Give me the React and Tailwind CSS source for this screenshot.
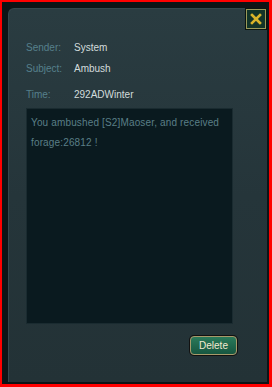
import React from "react";

const rows = [
  { label: "Sender:", value: "System", gap: "mt-[33px]" },
  { label: "Subject:", value: "Ambush", gap: "mt-[9px]" },
  { label: "Time:", value: "292ADWinter", gap: "mt-[14px]" },
];

export default function App() {
  return (
    <div
      className="w-[272px] h-[387px] border-l-2 border-t-2 border-r-[3px] border-b-[3px] border-[#ff0000] bg-[#0d1416] p-[6px] pr-[2px] pb-[2px]"
      style={{ fontFamily: '"Liberation Sans", Arial, sans-serif' }}
    >
      <div className="relative h-full rounded-tl-[6px] bg-gradient-to-b from-[#2a3c41] via-[#25353a] to-[#233236] border-l border-t border-[#34474c] pl-[17px] pr-[34px]">
        {/* close */}
        <button className="absolute right-[1px] top-[0px] w-[20px] h-[20px] bg-[#123429] border border-[#9a9a5a] shadow-[0_0_0_1px_#0a1410] flex items-center justify-center">
          <svg width="12" height="12" viewBox="0 0 12 12">
            <path d="M2 2 L10 10 M10 2 L2 10" stroke="#d8b42a" strokeWidth="2.6" strokeLinecap="square" />
          </svg>
        </button>

        {rows.map((r) => (
          <div key={r.label} className={`flex text-[10px] leading-[12px] ${r.gap}`}>
            <span className="w-[48px] text-[#56808c]">{r.label}</span>
            <span className="text-[#d2dcdc]">{r.value}</span>
          </div>
        ))}

        <div className="mt-[7px] h-[216px] bg-[#0a1a1f] border border-[#1a2b30] px-[4px] pt-[4px] text-[10px] leading-[20px] tracking-[0.15px] text-[#5a7f87]">
          You ambushed [S2]Maoser, and received forage:26812 !
        </div>

        <div className="flex justify-end mt-[12px] -mr-[4px]">
          <button className="w-[47px] h-[19px] rounded-[4px] bg-gradient-to-b from-[#2a7a5a] to-[#175640] border border-[#a89a6a] shadow-[0_0_0_1px_#111] text-[10px] text-[#f2ead0] leading-none">
            Delete
          </button>
        </div>
      </div>
    </div>
  );
}
